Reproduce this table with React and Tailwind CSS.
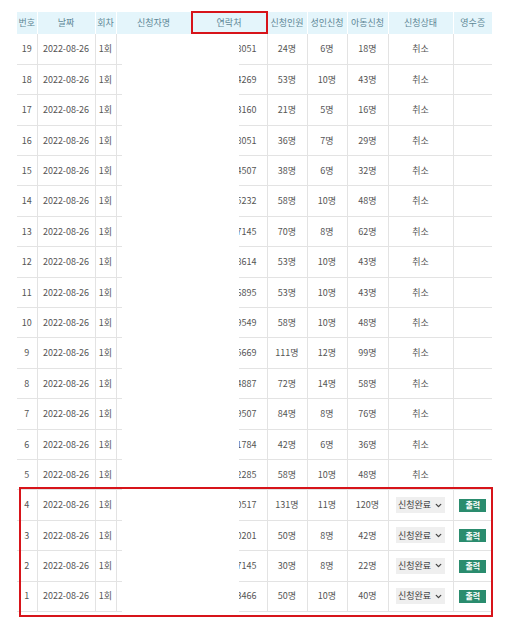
import { ChevronDown } from 'lucide-react';

const rows = [
    [19, '8051', 24, 6, 18],
    [18, '4269', 53, 10, 43],
    [17, '3160', 21, 5, 16],
    [16, '8051', 36, 7, 29],
    [15, '4507', 38, 6, 32],
    [14, '5232', 58, 10, 48],
    [13, '7145', 70, 8, 62],
    [12, '8614', 53, 10, 43],
    [11, '6895', 53, 10, 43],
    [10, '9549', 58, 10, 48],
    [9, '5669', 111, 12, 99],
    [8, '4887', 72, 14, 58],
    [7, '9507', 84, 8, 76],
    [6, '1784', 42, 6, 36],
    [5, '2285', 58, 10, 48],
    [4, '0517', 131, 11, 120],
    [3, '0201', 50, 8, 42],
    [2, '7145', 30, 8, 22],
    [1, '3466', 50, 10, 40],
];

const headers = ['번호', '날짜', '회차', '신청자명', '연락처', '신청인원', '성인신청', '아동신청', '신청상태', '영수증'];
const widths = [20, 58, 21, 75, 76, 40, 40, 41, 65, 39];

export default function App() {
    return (
        <div className="relative min-h-[636px] w-[507px] bg-white pl-[17px] pt-[12px] font-['Noto_Sans_CJK_KR','Noto_Sans',sans-serif] text-[9px] text-[#555]">
            <table className="table-fixed border-collapse w-[475px]">
                <colgroup>
                    {widths.map((w, i) => <col key={i} style={{ width: w }} />)}
                </colgroup>
                <thead>
                    <tr className="h-[22px] bg-[#e4f5fb] text-[#5e8796]">
                        {headers.map((h, i) => (
                            <th key={h} className={`font-normal text-center whitespace-nowrap p-0 ${i < headers.length - 1 ? 'border-r border-white' : ''}`}>{h}</th>
                        ))}
                    </tr>
                </thead>
                <tbody>
                    {rows.map(([no, tel, total, adult, kid]) => (
                        <tr key={no} className="h-[30.4px] border-b border-[#e3e3e3]">
                            <td className="text-center border-r border-[#e3e3e3]">{no}</td>
                            <td className="text-center border-r border-[#e3e3e3]">2022-08-26</td>
                            <td className="text-center border-r border-[#e3e3e3]">1회</td>
                            <td></td>
                            <td className="text-right pr-[10px] border-r border-[#e3e3e3]">{tel}</td>
                            <td className="text-center border-r border-[#e3e3e3]">{total}명</td>
                            <td className="text-center border-r border-[#e3e3e3]">{adult}명</td>
                            <td className="text-center border-r border-[#e3e3e3]">{kid}명</td>
                            <td className="text-center border-r border-[#e3e3e3]">
                                {no <= 4 ? (
                                    <span className="inline-flex items-center justify-center gap-[3px] w-[49px] h-[16px] bg-[#efefef] text-[#444]">
                                        신청완료
                                        <ChevronDown size={9} strokeWidth={3.5} />
                                    </span>
                                ) : '취소'}
                            </td>
                            <td className="text-center">
                                {no <= 4 && (
                                    <span className="inline-flex items-center justify-center w-[27px] h-[13px] bg-[#2a8c6e] text-white text-[8px] font-bold">출력</span>
                                )}
                            </td>
                        </tr>
                    ))}
                </tbody>
            </table>

            {/* redacted name area */}
            <div className="absolute left-[122px] top-[34px] w-[117px] h-[580px] bg-white" />

            {/* highlight boxes */}
            <div className="absolute left-[191px] top-[11px] w-[77px] h-[23px] border-2 border-[#d7141a]" />
            <div className="absolute left-[19px] top-[487px] w-[474px] h-[130px] border-2 border-[#d7141a]" />
        </div>
    );
}
